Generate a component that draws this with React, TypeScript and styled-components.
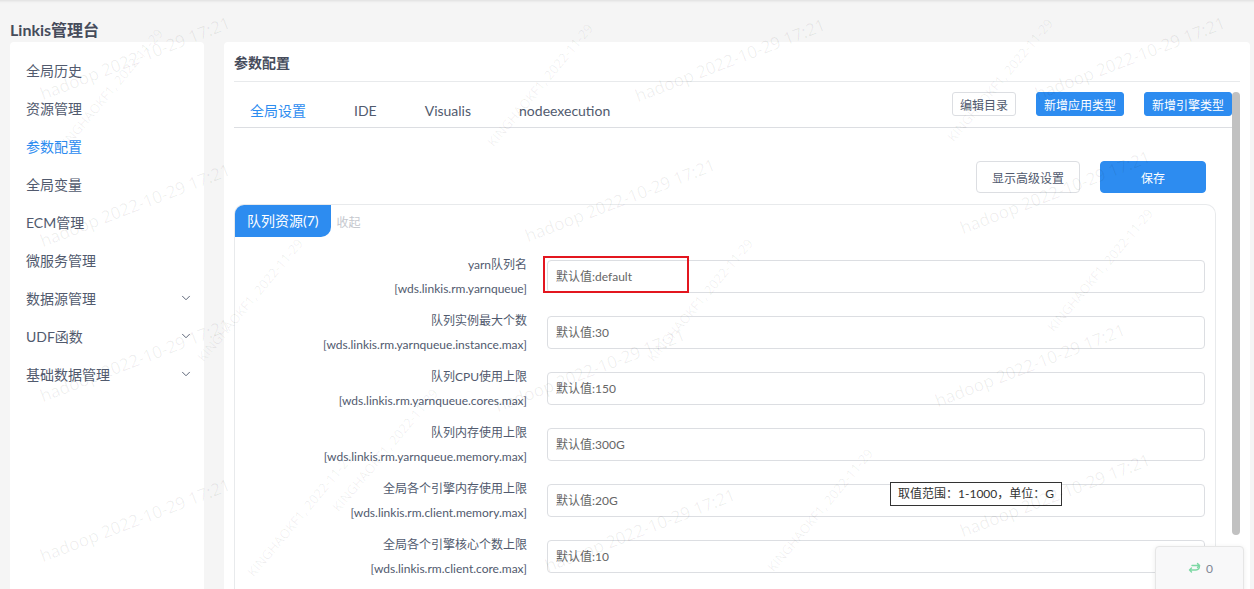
import React from "react";
import styled, { createGlobalStyle } from "styled-components";
import { ChevronDown } from "lucide-react";

const GlobalStyle = createGlobalStyle`
  html, body { margin: 0; padding: 0; }
  body {
    background: #f5f5f5;
    font-family: Lato, "Noto Sans CJK SC", sans-serif;
    color: #515a6e;
    overflow: hidden;
  }
  * { box-sizing: border-box; }
`;

const Page = styled.div`
  position: relative;
  height: 100vh;
  display: flex;
  flex-direction: column;
  overflow: hidden;
  box-shadow: inset 0 4px 3px -3px rgba(0, 0, 0, 0.1);
`;

const Brand = styled.div`
  height: 42px;
  padding: 19px 10px 0;
  font-size: 16px;
  font-weight: 700;
  line-height: 22px;
  color: #464c5b;
`;

const Body = styled.div`
  flex: 1;
  min-height: 0;
  display: flex;
  gap: 20px;
  padding: 0 4px 0 10px;
`;

const Sidebar = styled.nav`
  width: 194px;
  flex-shrink: 0;
  background: #fff;
  border-radius: 4px 4px 0 0;
  padding-top: 9px;
`;

const MenuItem = styled.div<{ $active?: boolean }>`
  height: 38px;
  display: flex;
  align-items: center;
  justify-content: space-between;
  padding: 0 11px 0 16px;
  font-size: 14px;
  color: ${(p) => (p.$active ? "#2d8cf0" : "#515a6e")};
`;

const Main = styled.main`
  flex: 1;
  min-width: 0;
  display: flex;
  flex-direction: column;
  background: #fff;
  border-radius: 4px 4px 0 0;
  padding: 10px 10px 0;
`;

const MainTitle = styled.div`
  font-size: 14px;
  font-weight: 600;
  line-height: 22px;
  color: #464c5b;
  padding-bottom: 7px;
  border-bottom: 1px solid #e8eaec;
`;

const ScrollArea = styled.div`
  flex: 1;
  min-height: 0;
  display: flex;
  margin-top: 10px;
`;

const ContentCol = styled.div`
  flex: 1;
  min-width: 0;
  display: flex;
  flex-direction: column;
`;

const ScrollTrack = styled.div`
  width: 8px;
  flex-shrink: 0;
`;

const ScrollThumb = styled.div`
  height: 443px;
  background: #c1c1c1;
  border-radius: 4px;
`;

const TabBar = styled.div`
  height: 36px;
  display: flex;
  align-items: flex-start;
  border-bottom: 1px solid #dcdee2;
`;

const Tab = styled.div<{ $active?: boolean }>`
  padding: 9px 16px 0;
  margin-right: 16px;
  font-size: 14px;
  line-height: 20px;
  color: ${(p) => (p.$active ? "#2d8cf0" : "#515a6e")};
`;

const TabActions = styled.div`
  margin-left: auto;
  display: flex;
  gap: 20px;
`;

const Button = styled.button<{ $primary?: boolean; $small?: boolean; $width?: number }>`
  height: ${(p) => (p.$small ? 24 : 32)}px;
  padding: 0 ${(p) => (p.$small ? 7 : 15)}px;
  ${(p) => (p.$width ? `width: ${p.$width}px;` : "")}
  font-family: inherit;
  font-size: 12px;
  border-radius: ${(p) => (p.$small ? 3 : 4)}px;
  border: 1px solid ${(p) => (p.$primary ? "#2d8cf0" : "#dcdee2")};
  background: ${(p) => (p.$primary ? "#2d8cf0" : "#fff")};
  color: ${(p) => (p.$primary ? "#fff" : "#515a6e")};
  cursor: pointer;
`;

const ActionRow = styled.div`
  display: flex;
  justify-content: flex-end;
  gap: 20px;
  margin-top: 33px;
  padding-right: 26px;
`;

const Panel = styled.section`
  margin: 11px 16px 0 0;
  border: 1px solid #e8eaec;
  border-bottom: none;
  border-radius: 10px 10px 0 0;
  flex: 1;
`;

const PanelHeader = styled.div`
  display: flex;
  align-items: center;
`;

const PanelTab = styled.div`
  height: 32px;
  line-height: 32px;
  padding: 0 12px;
  font-size: 14px;
  color: #fff;
  background: #2d8cf0;
  border-radius: 9px 0 10px 0;
`;

const Collapse = styled.span`
  margin-left: 6px;
  font-size: 12px;
  color: #c5c8ce;
`;

const Form = styled.div`
  padding: 16px 10px 0 0;
`;

const Row = styled.div`
  display: grid;
  grid-template-columns: 292px 1fr;
  column-gap: 20px;
  height: 56px;
`;

const Label = styled.div`
  text-align: right;
  font-size: 12px;
  line-height: 24px;
  color: #515a6e;
  white-space: nowrap;
`;

const Field = styled.div`
  position: relative;
  margin-top: 7px;
  height: 33px;
`;

const Input = styled.input`
  width: 100%;
  height: 100%;
  border: 1px solid #dcdee2;
  border-radius: 4px;
  padding: 0 8px;
  font-family: inherit;
  font-size: 12px;
  color: #515a6e;
  outline: none;
  &::placeholder {
    color: #666;
  }
`;

const Highlight = styled.div`
  position: absolute;
  left: -4px;
  top: -4px;
  width: 146px;
  height: 37px;
  border: 2px solid #e3161f;
  pointer-events: none;
`;

const Tip = styled.div`
  position: absolute;
  left: 343px;
  top: -2px;
  height: 24px;
  line-height: 22px;
  padding: 0 7px;
  font-size: 12px;
  color: #333;
  background: #fff;
  border: 1px solid #333;
  white-space: nowrap;
`;

const Floater = styled.div`
  position: absolute;
  left: 1155px;
  top: 546px;
  width: 89px;
  height: 60px;
  display: flex;
  align-items: flex-start;
  gap: 5px;
  padding: 15px 0 0 32px;
  background: #f8f8f9;
  border: 1px solid #e6e6e6;
  border-radius: 4px;
  box-shadow: 0 1px 5px rgba(0, 0, 0, 0.08);
  font-size: 12px;
  line-height: 14px;
  color: #808695;
  z-index: 6;
`;

const Watermarks = styled.div`
  position: absolute;
  inset: 0;
  pointer-events: none;
  z-index: 5;
`;

const Mark = styled.span<{ $steep?: boolean }>`
  position: absolute;
  white-space: nowrap;
  font-family: "Open Sans", sans-serif;
  font-size: ${(p) => (p.$steep ? 13 : 17)}px;
  color: rgba(0, 0, 0, 0.065);
  transform: translate(-50%, -50%) rotate(${(p) => (p.$steep ? -50 : -21)}deg);
`;

const menu = [
  { name: "全局历史" },
  { name: "资源管理" },
  { name: "参数配置", active: true },
  { name: "全局变量" },
  { name: "ECM管理" },
  { name: "微服务管理" },
  { name: "数据源管理", sub: true },
  { name: "UDF函数", sub: true },
  { name: "基础数据管理", sub: true },
];

const tabs = ["全局设置", "IDE", "Visualis", "nodeexecution"];

const rows = [
  { label: "yarn队列名", key: "wds.linkis.rm.yarnqueue", value: "default" },
  { label: "队列实例最大个数", key: "wds.linkis.rm.yarnqueue.instance.max", value: "30" },
  { label: "队列CPU使用上限", key: "wds.linkis.rm.yarnqueue.cores.max", value: "150" },
  { label: "队列内存使用上限", key: "wds.linkis.rm.yarnqueue.memory.max", value: "300G" },
  { label: "全局各个引擎内存使用上限", key: "wds.linkis.rm.client.memory.max", value: "20G" },
  { label: "全局各个引擎核心个数上限", key: "wds.linkis.rm.client.core.max", value: "10" },
];

const hadoopMarks = [
  [135, 58], [730, 60], [1130, 58],
  [135, 205], [620, 200], [1055, 192],
  [135, 360], [590, 370], [1030, 365],
  [135, 520], [640, 530], [1055, 495],
];

const kingMarks = [
  [110, 90], [540, 85], [1000, 80],
  [250, 300], [700, 300], [1100, 270],
  [385, 450], [820, 510], [300, 515],
];

const SwapIcon = () => (
  <svg width="13" height="11" viewBox="0 0 13 11" fill="none" stroke="#7dd8a4" strokeWidth="1.4" strokeLinecap="round" strokeLinejoin="round">
    <path d="M4 3.5h7.5M9.5 1.5l2 2-2 2" />
    <path d="M11.5 3.5c0 3-1 4.5-3.5 4.5H1.5M3.5 6l-2 2 2 2" />
  </svg>
);

export default function App() {
  return (
    <Page>
      <GlobalStyle />
      <Brand>Linkis管理台</Brand>
      <Body>
        <Sidebar>
          {menu.map((m) => (
            <MenuItem key={m.name} $active={m.active}>
              <span>{m.name}</span>
              {m.sub && <ChevronDown size={14} strokeWidth={1.6} color="#515a6e" />}
            </MenuItem>
          ))}
        </Sidebar>
        <Main>
          <MainTitle>参数配置</MainTitle>
          <ScrollArea>
            <ContentCol>
              <TabBar>
                {tabs.map((t, i) => (
                  <Tab key={t} $active={i === 0}>
                    {t}
                  </Tab>
                ))}
                <TabActions>
                  <Button $small>编辑目录</Button>
                  <Button $small $primary>新增应用类型</Button>
                  <Button $small $primary>新增引擎类型</Button>
                </TabActions>
              </TabBar>
              <ActionRow>
                <Button>显示高级设置</Button>
                <Button $primary $width={106}>保存</Button>
              </ActionRow>
              <Panel>
                <PanelHeader>
                  <PanelTab>队列资源(7)</PanelTab>
                  <Collapse>收起</Collapse>
                </PanelHeader>
                <Form>
                  {rows.map((r, i) => (
                    <Row key={r.key}>
                      <Label>
                        <div>{r.label}</div>
                        <div>[{r.key}]</div>
                      </Label>
                      <Field>
                        <Input placeholder={`默认值:${r.value}`} readOnly />
                        {i === 0 && <Highlight />}
                        {i === 4 && <Tip>取值范围：1-1000，单位：G</Tip>}
                      </Field>
                    </Row>
                  ))}
                </Form>
              </Panel>
            </ContentCol>
            <ScrollTrack>
              <ScrollThumb />
            </ScrollTrack>
          </ScrollArea>
        </Main>
      </Body>
      <Floater>
        <SwapIcon />
        <span>0</span>
      </Floater>
      <Watermarks>
        {hadoopMarks.map(([x, y], i) => (
          <Mark key={`h${i}`} style={{ left: x, top: y }}>
            hadoop 2022-10-29 17:21
          </Mark>
        ))}
        {kingMarks.map(([x, y], i) => (
          <Mark key={`k${i}`} $steep style={{ left: x, top: y }}>
            KINGHAOKF1, 2022-11-29
          </Mark>
        ))}
      </Watermarks>
    </Page>
  );
}
